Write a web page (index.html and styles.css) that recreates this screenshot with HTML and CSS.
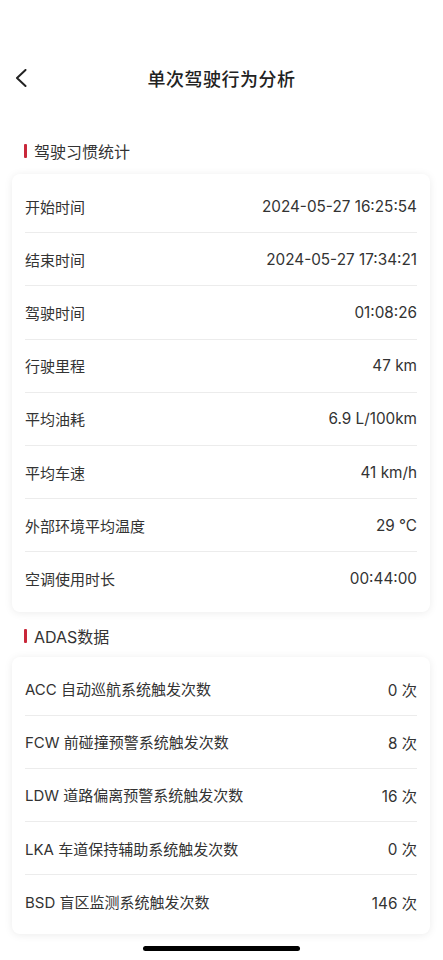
FILE: index.html
```html
<!DOCTYPE html>
<html>
<head>
    <meta charset="utf-8">
    <title>单次驾驶行为分析</title>
    <link rel="stylesheet" href="styles.css">
</head>

<body>
    <div class="page">
        <div class="status-bar"></div>

        <div class="nav-bar">
            <div class="back">
                <svg width="12" height="18" viewBox="0 0 12 18">
                    <polyline points="10.5,1 2,9 10.5,17" fill="none" stroke="#222" stroke-width="2" stroke-linecap="round" stroke-linejoin="round"/>
                </svg>
            </div>
            <div class="nav-title">单次驾驶行为分析</div>
        </div>

        <div class="section-title first">驾驶习惯统计</div>
        <div class="card">
            <div class="row"><span class="label">开始时间</span><span class="value">2024-05-27 16:25:54</span></div>
            <div class="row"><span class="label">结束时间</span><span class="value">2024-05-27 17:34:21</span></div>
            <div class="row"><span class="label">驾驶时间</span><span class="value">01:08:26</span></div>
            <div class="row"><span class="label">行驶里程</span><span class="value">47 km</span></div>
            <div class="row"><span class="label">平均油耗</span><span class="value">6.9 L/100km</span></div>
            <div class="row"><span class="label">平均车速</span><span class="value">41 km/h</span></div>
            <div class="row"><span class="label">外部环境平均温度</span><span class="value">29 °C</span></div>
            <div class="row"><span class="label">空调使用时长</span><span class="value">00:44:00</span></div>
        </div>

        <div class="section-title">ADAS数据</div>
        <div class="card">
            <div class="row"><span class="label">ACC 自动巡航系统触发次数</span><span class="value">0 次</span></div>
            <div class="row"><span class="label">FCW 前碰撞预警系统触发次数</span><span class="value">8 次</span></div>
            <div class="row"><span class="label">LDW 道路偏离预警系统触发次数</span><span class="value">16 次</span></div>
            <div class="row"><span class="label">LKA 车道保持辅助系统触发次数</span><span class="value">0 次</span></div>
            <div class="row"><span class="label">BSD 盲区监测系统触发次数</span><span class="value">146 次</span></div>
        </div>

        <div class="home-indicator"></div>
    </div>
</body>
</html>
```

FILE: styles.css
```css
body {
    margin: 0;
    padding: 0;
    background-color: #fff;
    font-family: "Inter", "Noto Sans CJK SC", sans-serif;
    color: #333;
}

.page {
    display: flex;
    flex-direction: column;
    width: 443px;
    min-height: 960px;
}

.status-bar {
    height: 44px;
}

.nav-bar {
    position: relative;
    display: flex;
    justify-content: center;
    align-items: center;
    height: 68px;
}

.back {
    position: absolute;
    left: 15px;
    top: 25px;
    display: flex;
}

.nav-title {
    font-family: "Noto Sans CJK SC", sans-serif;
    font-size: 18px;
    font-weight: 500;
    color: #222;
    letter-spacing: 0.5px;
}

.section-title {
    display: flex;
    align-items: center;
    height: 22px;
    margin: 13px 24px 10px;
    font-size: 16px;
    color: #333;
}

.section-title.first {
    margin-top: 28px;
    margin-bottom: 12px;
}

.section-title::before {
    content: "";
    width: 3px;
    height: 14px;
    margin-right: 7px;
    border-radius: 1px;
    background-color: #c9283a;
}

.card {
    margin: 0 13px 0 12px;
    padding: 6px 13px;
    background-color: #fff;
    border-radius: 8px;
    box-shadow: 0 1px 8px rgba(0, 0, 0, 0.08);
}

.row {
    display: flex;
    justify-content: space-between;
    align-items: center;
    height: 53.2px;
    box-sizing: border-box;
    border-bottom: 1px solid #ececec;
    font-size: 15px;
}

.row:last-child {
    border-bottom: none;
}

.label {
    color: #333;
}

.value {
    color: #333;
    font-size: 15.3px;
}

.home-indicator {
    align-self: center;
    width: 157px;
    height: 5px;
    margin-top: auto;
    margin-bottom: 9px;
    border-radius: 3px;
    background-color: #000;
}
```
